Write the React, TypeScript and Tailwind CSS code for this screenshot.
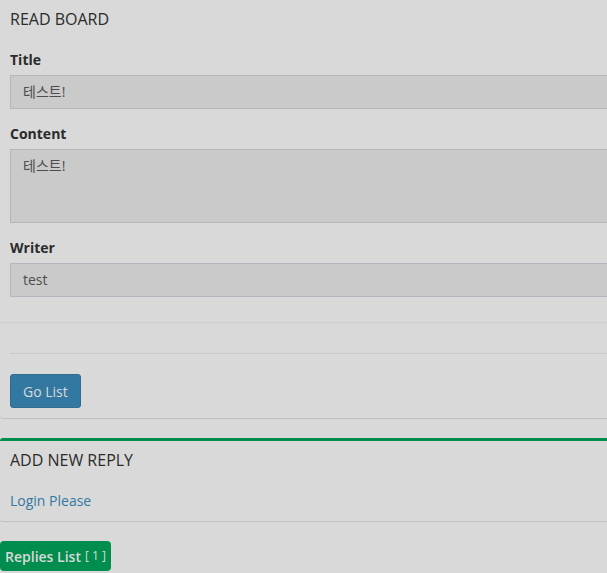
import React from 'react'

const font = { fontFamily: '"Open Sans", "Noto Sans CJK KR", sans-serif' }

function BoxHeader({ title }: { title: string }) {
  return (
    <div className="h-[40px] px-[10px] pt-[11px]">
      <h3 className="text-[16px] leading-none text-[#2b2b2b]">{title}</h3>
    </div>
  )
}

function Field({ label, value, tall }: { label: string; value: string; tall?: boolean }) {
  return (
    <div className="mb-[15px]">
      <label className="mb-[5px] block text-[14px] font-bold leading-[20px] text-[#2b2b2b]">
        {label}
      </label>
      <div
        className={`w-full border border-[#b3b6bd] bg-[#cacaca] px-[12px] py-[6px] text-[14px] leading-[20px] text-[#4d4d4d] ${
          tall ? 'h-[74px]' : 'h-[34px]'
        }`}
      >
        {value}
      </div>
    </div>
  )
}

export default function App() {
  return (
    <div className="min-h-screen w-full overflow-hidden bg-[#d9d9d9]" style={font}>
      <div className="w-[660px]">
        {/* read board */}
        <div className="mb-[20px] rounded-[3px] bg-[#d9d9d9] shadow-[0_1px_1px_rgba(0,0,0,0.12)]">
          <BoxHeader title="READ BOARD" />
          <div className="p-[10px]">
            <Field label="Title" value="테스트!" />
            <Field label="Content" value="테스트!" tall />
            <Field label="Writer" value="test" />
          </div>
          <div className="border-t border-[#cfcfcf] p-[10px]">
            <hr className="my-[20px] border-t border-[#cacaca]" />
            <button className="h-[34px] rounded-[3px] border border-[#2e6c90] bg-[#3378a0] px-[12px] text-[14px] text-[#d9d9d9]">
              Go List
            </button>
          </div>
        </div>

        {/* reply */}
        <div className="mb-[20px] rounded-[3px] border-t-[3px] border-[#008d4d] bg-[#d9d9d9] shadow-[0_1px_1px_rgba(0,0,0,0.12)]">
          <BoxHeader title="ADD NEW REPLY" />
          <div className="p-[10px] text-[14px] leading-[20px]">
            <a className="text-[#3378a0]">Login Please</a>
          </div>
        </div>

        <div className="inline-flex h-[30px] items-center rounded-[4px] bg-[#008d4d] px-[5px] text-[#d9d9d9]">
          <span className="text-[14px] font-semibold">Replies List</span>
          <span className="ml-[4px] text-[12px]">[ 1 ]</span>
        </div>
      </div>
    </div>
  )
}
